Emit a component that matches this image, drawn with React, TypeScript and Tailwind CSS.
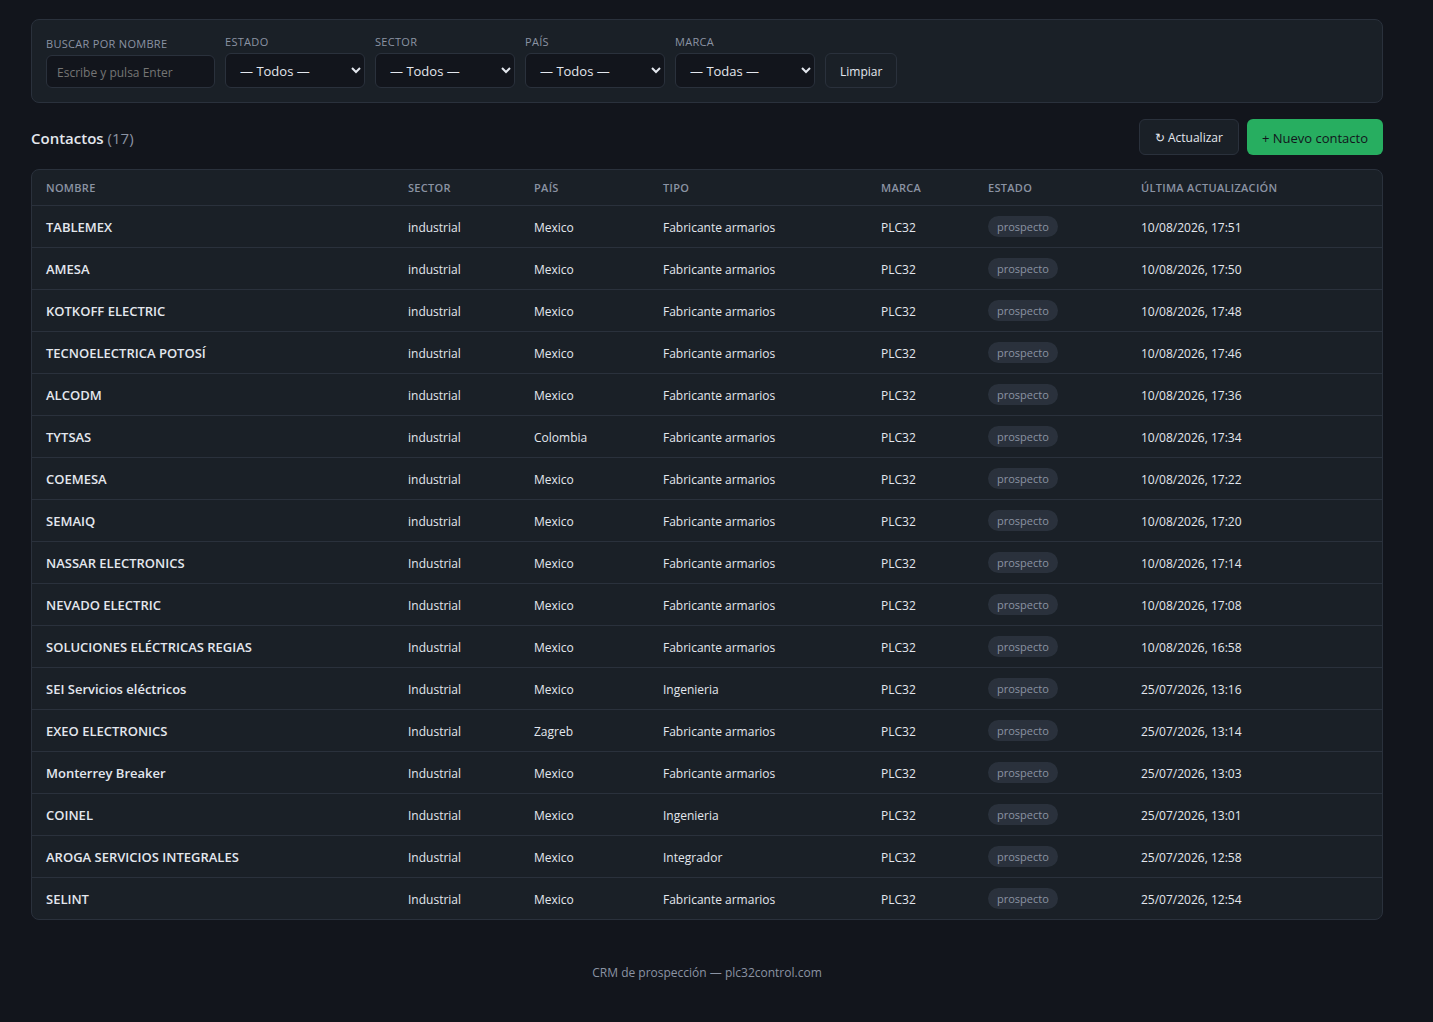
import { useState } from "react";

type Contact = {
  name: string;
  sector: string;
  country: string;
  type: string;
  brand: string;
  status: string;
  updatedAt: string;
};

const row = (
  name: string,
  sector: string,
  country: string,
  type: string,
  updatedAt: string
): Contact => ({
  name,
  sector,
  country,
  type,
  brand: "PLC32",
  status: "prospecto",
  updatedAt,
});

const contacts: Contact[] = [
  row("TABLEMEX", "industrial", "Mexico", "Fabricante armarios", "10/08/2026, 17:51"),
  row("AMESA", "industrial", "Mexico", "Fabricante armarios", "10/08/2026, 17:50"),
  row("KOTKOFF ELECTRIC", "industrial", "Mexico", "Fabricante armarios", "10/08/2026, 17:48"),
  row("TECNOELECTRICA POTOSÍ", "industrial", "Mexico", "Fabricante armarios", "10/08/2026, 17:46"),
  row("ALCODM", "industrial", "Mexico", "Fabricante armarios", "10/08/2026, 17:36"),
  row("TYTSAS", "industrial", "Colombia", "Fabricante armarios", "10/08/2026, 17:34"),
  row("COEMESA", "industrial", "Mexico", "Fabricante armarios", "10/08/2026, 17:22"),
  row("SEMAIQ", "industrial", "Mexico", "Fabricante armarios", "10/08/2026, 17:20"),
  row("NASSAR ELECTRONICS", "Industrial", "Mexico", "Fabricante armarios", "10/08/2026, 17:14"),
  row("NEVADO ELECTRIC", "Industrial", "Mexico", "Fabricante armarios", "10/08/2026, 17:08"),
  row("SOLUCIONES ELÉCTRICAS REGIAS", "Industrial", "Mexico", "Fabricante armarios", "10/08/2026, 16:58"),
  row("SEI Servicios eléctricos", "Industrial", "Mexico", "Ingenieria", "25/07/2026, 13:16"),
  row("EXEO ELECTRONICS", "Industrial", "Zagreb", "Fabricante armarios", "25/07/2026, 13:14"),
  row("Monterrey Breaker", "Industrial", "Mexico", "Fabricante armarios", "25/07/2026, 13:03"),
  row("COINEL", "Industrial", "Mexico", "Ingenieria", "25/07/2026, 13:01"),
  row("AROGA SERVICIOS INTEGRALES", "Industrial", "Mexico", "Integrador", "25/07/2026, 12:58"),
  row("SELINT", "Industrial", "Mexico", "Fabricante armarios", "25/07/2026, 12:54"),
];

const columns = [
  { label: "Nombre", width: "w-[362px]" },
  { label: "Sector", width: "w-[126px]" },
  { label: "País", width: "w-[129px]" },
  { label: "Tipo", width: "w-[218px]" },
  { label: "Marca", width: "w-[107px]" },
  { label: "Estado", width: "w-[153px]" },
  { label: "Última actualización", width: "w-[255px]" },
];

const filters = [
  { id: "estado", label: "Estado", all: "— Todos —" },
  { id: "sector", label: "Sector", all: "— Todos —" },
  { id: "pais", label: "País", all: "— Todos —" },
  { id: "marca", label: "Marca", all: "— Todas —" },
];

const labelClass = "text-[11px] leading-4 tracking-[0.3px] uppercase text-[#8b93a3]";

const Filters = () => {
  const [search, setSearch] = useState("");

  return (
    <form
      onSubmit={(e) => e.preventDefault()}
      className="flex flex-wrap items-end gap-[10px] rounded-lg border border-[#2a313c] bg-[#1a2027] p-[14px]"
    >
      <div className="flex flex-col gap-[3px]">
        <label htmlFor="buscar" className={labelClass}>
          Buscar por nombre
        </label>
        <input
          id="buscar"
          type="text"
          value={search}
          onChange={(e) => setSearch(e.target.value)}
          placeholder="Escribe y pulsa Enter"
          className="h-[33px] w-[169px] rounded-md border border-[#2a313c] bg-[#12151c] px-[10px] pt-[2px] text-[12px] placeholder:text-[#757575]"
        />
      </div>

      {filters.map(({ id, label, all }) => (
        <div key={id} className="flex flex-col gap-[3px]">
          <label htmlFor={id} className={labelClass}>
            {label}
          </label>
          <select
            id={id}
            className="h-[35px] w-[140px] rounded-md border border-[#2a313c] bg-[#12151c] px-[10px] text-[13px]"
          >
            <option>{all}</option>
          </select>
        </div>
      ))}

      <button
        type="reset"
        onClick={() => setSearch("")}
        className="h-[35px] rounded-md border border-[#2a313c] bg-[#1a2027] px-[14px] pt-[2px] text-[12px]"
      >
        Limpiar
      </button>
    </form>
  );
};

const ContactsTable = () => (
  <div className="overflow-hidden rounded-lg border border-[#2a313c] bg-[#1a2027]">
    <table className="w-full table-fixed border-separate border-spacing-0 text-left text-[12px]">
      <thead>
        <tr>
          {columns.map(({ label, width }) => (
            <th
              key={label}
              className={`${width} h-9 border-b border-[#2a313c] px-[14px] pt-[2px] text-[11px] font-semibold tracking-[0.3px] uppercase text-[#8b93a3]`}
            >
              {label}
            </th>
          ))}
        </tr>
      </thead>
      <tbody className="[&>tr:last-child>td]:h-[41px] [&>tr:last-child>td]:border-b-0">
        {contacts.map((c) => (
          <tr key={c.name} className="*:h-[42px] *:border-b *:border-[#2a313c] *:px-[14px]">
            <td className="pt-[2px] text-[13px] font-semibold whitespace-nowrap">{c.name}</td>
            <td className="pt-[2px]">{c.sector}</td>
            <td className="pt-[2px]">{c.country}</td>
            <td className="pt-[2px]">{c.type}</td>
            <td className="pt-[2px]">{c.brand}</td>
            <td>
              <span className="inline-block rounded-full bg-[#2a313c] px-[9px] align-middle text-[11px] leading-[21px] font-medium text-[#8b93a3]">
                {c.status}
              </span>
            </td>
            <td className="pt-[2px]">{c.updatedAt}</td>
          </tr>
        ))}
      </tbody>
    </table>
  </div>
);

export default function App() {
  return (
    <div className="min-h-screen bg-[#12151c] pt-[19px] pr-[50px] pb-10 pl-[31px] font-['Open_Sans','Noto_Sans',sans-serif] text-[#e3e7ee]">
      <main>
        <Filters />

        {/* TITLE / ACTIONS */}
        <div className="mt-4 mb-[14px] flex items-center justify-between">
          <h2 className="pt-[2px] text-[15px] font-semibold">
            Contactos{" "}
            <span className="font-normal text-[#8b93a3]">({contacts.length})</span>
          </h2>
          <div className="flex gap-2">
            <button
              type="button"
              className="h-9 rounded-md border border-[#2a313c] bg-[#1a2027] px-[15px] pt-[2px] text-[12px]"
            >
              ↻ Actualizar
            </button>
            <button
              type="button"
              className="h-9 rounded-md bg-[#27ae60] px-[15px] pt-1 text-[13px] font-medium text-[#12151c]"
            >
              + Nuevo contacto
            </button>
          </div>
        </div>

        <ContactsTable />
      </main>

      <footer className="mt-11 text-center text-[12px] leading-[18px] text-[#8b93a3]">
        CRM de prospección — plc32control.com
      </footer>
    </div>
  );
}
